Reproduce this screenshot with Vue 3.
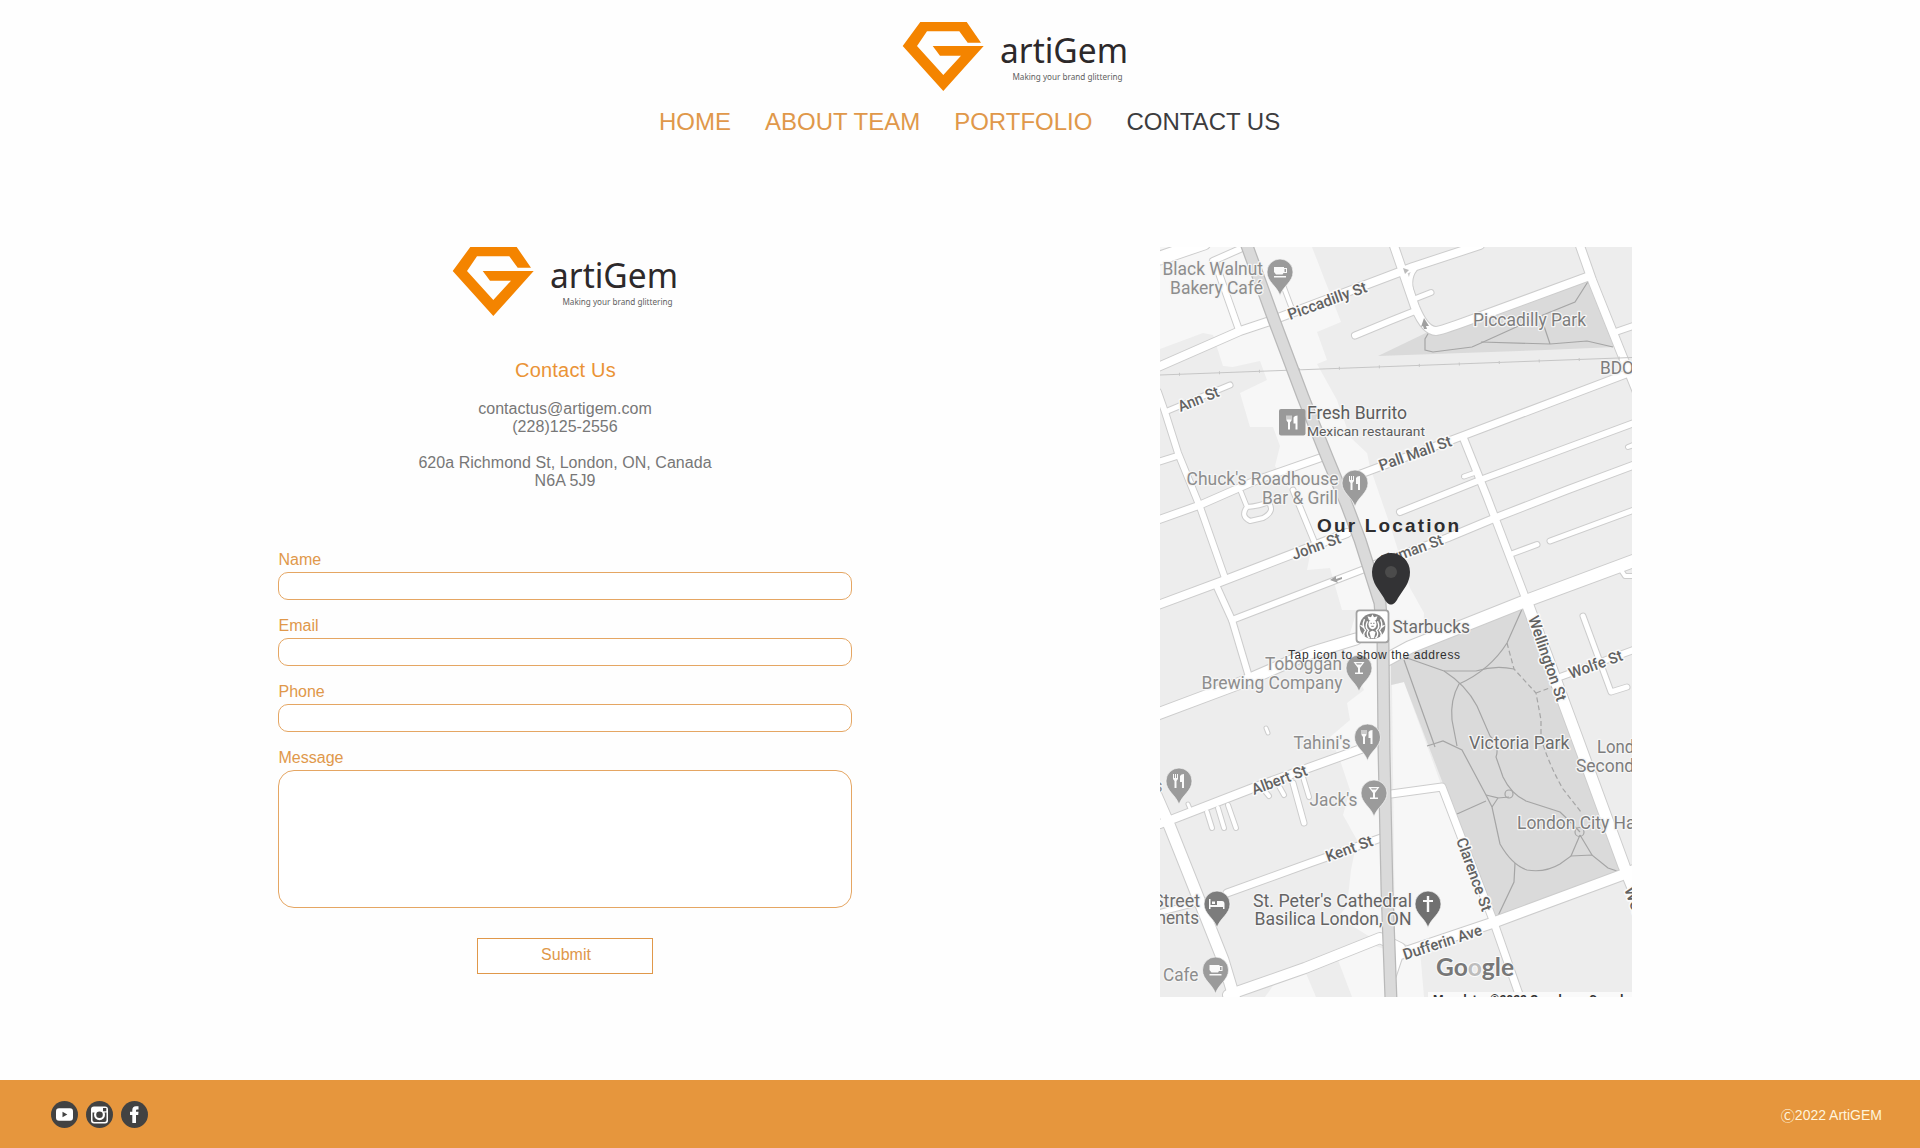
<script setup>
import { h } from 'vue'

const BrandLogo = () =>
  h('svg', { viewBox: '0 0 228 72', width: 228, height: 72, role: 'img', 'aria-label': 'artiGem' }, [
    h('path', {
      fill: '#f48400',
      d: 'M1.7 25 19.3 1H65.7L80 21.7H66.7L58.3 10.3H26L16 25 42.3 54 60 34.7H39L31.7 25H82.7L42.3 70Z'
    }),
    h('text', { x: 99, y: 41.7, 'font-family': '"Noto Sans", sans-serif', 'font-size': 34, fill: '#2d292a', textLength: 128, lengthAdjust: 'spacingAndGlyphs' }, 'artiGem'),
    h('text', { x: 111.5, y: 59.3, 'font-family': '"Noto Sans", sans-serif', 'font-size': 8.6, fill: '#606060', textLength: 110, lengthAdjust: 'spacingAndGlyphs' }, 'Making your brand glittering')
  ])

const nav = [
  { label: 'HOME' },
  { label: 'ABOUT TEAM' },
  { label: 'PORTFOLIO' },
  { label: 'CONTACT US', active: true }
]
const fields = ['Name', 'Email', 'Phone']

// [stroke width, path]
const roads = [
  [13, 'M1160 258 1204 243'],
  [6, 'M1213 261 1240 249'],
  [6, 'M1215 262 1239 330'],
  [4, 'M1283 285 1292 309'],
  [8, 'M1158 367 1240 331 1270 321 1397 273 1413 267 1480 245'],
  [6, 'M1355 335.5 1390 321 1415 311'],
  [8, 'M1393 243 1415 307Q1425 331 1436 331 1440 331 1470 320L1587 277'],
  [4, 'M1415 269Q1406 280 1414 299'],
  [5, 'M1417 298 1431 292.5'],
  [8, 'M1579 243 1592 280 1620 350 1637 392'],
  [6, 'M1617 331.5 1636 325'],
  [5, 'M1165 412 1230 385'],
  [6, 'M1158 392 1165 412 1178 453 1200 507 1225 578'],
  [6, 'M1158 462 1177 456'],
  [6, 'M1217 587 1232 620 1249 677'],
  [7, 'M1158 520 1200 505 1257 480 1320 458'],
  [7, 'M1358 475 1457 438 1634 371'],
  [6, 'M1400 512 1480 480 1634 423'],
  [4, 'M1464 476.5 1477 472'],
  [4, 'M1628 447 1636 444'],
  [7, 'M1463 437 1487 497 1527 602'],
  [8, 'M1158 605 1220 582 1347 533'],
  [7, 'M1368 567 1447 538 1495 518 1567 490 1634 465'],
  [5, 'M1550 541 1634 510'],
  [5, 'M1510 554.5 1537 544.5'],
  [4, 'M1241 492 1247 507M1247 507Q1260 506 1268 502 1276 511 1263 518L1250 521Q1240 516 1247 507'],
  [5, 'M1293 490 1314 541'],
  [6, 'M1232 620 1362 570'],
  [11, 'M1158 714 1243 682 1310 653 1356 639'],
  [12, 'M1386 660 1410 647 1523 602 1636 560'],
  [4, 'M1621 570 1625 576 1636 576'],
  [5, 'M1583 616 1611 692 1627 687'],
  [6, 'M1560 677 1636 649'],
  [11, 'M1527 603 1577 738 1624 866 1640 905'],
  [7, 'M1391 794 1442 787 1493 920 1521 1000'],
  [10, 'M1228 995 1305 968 1380 938 1400 948 1391 975M1400 954 1495 922 1622 875 1636 869'],
  [8, 'M1160 824 1253 788 1372 745'],
  [11, 'M1156 795 1170 827 1223 960 1235 1000'],
  [7, 'M1227 893 1310 863 1381 838'],
  [5, 'M1158 913 1200 902'],
  [4, 'M1207 812 1212 828'],
  [4, 'M1218 808 1224 828'],
  [4, 'M1228 805 1236 828'],
  [5, 'M1293 783 1304 823'],
  [4, 'M1303 777 1309 797'],
  [4, 'M1279 786 1284 795'],
  [4, 'M1264 790 1269 796'],
  [3, 'M1188 804 1191 811'],
  [3, 'M1266 728 1268 733']
]

const richmond =
  'M1246 243 1274 320 1303 397 1327 457 1346 503 1360 540 1380 603 1383 643 1384 750 1387 890 1391 1000'

const commercial = [
  'M1160 247H1312L1341 322 1317 332 1327 360 1317 364 1337 400 1350 437 1367 453 1370 467 1390 525 1410 588 1424 613 1423 640 1395 650 1378 660 1379 745 1383 945 1338 917 1347 906 1351 870 1357 840 1343 815 1350 790 1340 760 1330 737 1350 720 1347 703 1364 690 1345 650 1357 610 1342 610 1330 568 1307 570 1313 540 1290 490 1275 466 1280 446 1273 427 1250 427 1240 393 1267 380 1260 361 1233 367 1223 366 1213 335 1203 333 1160 349Z',
  'M1392 685 1404 682 1442 787 1493 920 1415 948 1395 940Z',
  'M1265 997 1275 983 1305 971 1316 997Z',
  'M1338 960 1375 946 1388 950 1388 997H1352Z',
  'M1395 965 1420 950 1424 997H1397Z'
]

const parks = [
  'M1378 356 1432 330 1440 333 1589 280 1616 347 1545 350Z',
  'M1391 664 1410 649 1524 604 1577 740 1622 874 1496 920 1457 820 1404 682 1391 685Z'
]

const paths = [
  'M1589 280 1575 302 1543 315 1481 343 1472 347 1433 352 1425 350 1425 339 1429 332',
  'M1481 342 1550 344 1587 341 1613 347M1550 344 1542 320',
  'M1523 607 1507 643Q1490 670 1459 684 1450 700 1452 720L1457 746',
  'M1404 660 1435 747M1407 658 1444 671Q1466 685 1477 706L1490 736Q1500 745 1496 757L1503 777Q1511 794 1526 801L1560 812Q1571 822 1580 832',
  'M1444 671 1476 671Q1495 665 1514 669',
  'M1427 746 1443 741 1462 750 1486 795 1492 807 1500 844Q1512 865 1527 870 1545 873 1560 864L1571 856 1592 855 1608 868 1620 872',
  'M1486 795 1498 798 1492 807M1498 798 1509 797M1486 801 1457 814M1515 863 1514 882 1497 918M1580 835 1571 856M1580 835 1592 855'
]
const dashed = 'M1507 643 1514 669 1536 693 1541 720 1541 738Q1549 765 1563 789L1581 812M1536 693 1555 686'

const pins = [
  { x: 1280, y: 272, icon: 'cup' },
  { x: 1355, y: 483, icon: 'fork' },
  { x: 1359, y: 668, icon: 'glass' },
  { x: 1367.5, y: 737, icon: 'fork' },
  { x: 1179, y: 781, icon: 'fork' },
  { x: 1374, y: 793, icon: 'glass' },
  { x: 1217, y: 904, icon: 'bed', fill: '#7c7c7c' },
  { x: 1215.5, y: 970, icon: 'cup' },
  { x: 1428, y: 904, icon: 'cross', fill: '#707070' }
]

const icons = {
  cup: 'M-6-5H4V-4H7V1H3.5L2.5 2.5H-4L-6 0ZM4.500-3V0H6V-3ZM-6 4H6V5.500H-6Z',
  fork: 'M-6-7H-5V-3H-4V-7H-3V-3H-2V-7H-1V-2L-2.500 0V7H-4.500V0L-6-2ZM1-5Q2-7 5-7V7H3V1H1Z',
  glass: 'M-5.500-6H5.500L1 0V4.500H4V6H-4V4.500H-1V0ZM-3-4.800-2-3.500H2L3-4.800Z',
  bed: 'M-8-5H-6.500V1H0V-3H5Q7.500-3 7.500 0V5H6V3H-6.500V5H-8ZM-5-2.500H-2V0H-5Z',
  cross: 'M-1.200-8H1.200V-4H5V-2H1.200V8H-1.200V-2H-5V-4H-1.200Z'
}

// Labels: text, x, baseline y, rendered length, colour
const places = [
  ['Black Walnut', 1162.5, 275, 100.5, '#8d8d8d'],
  ['Bakery Café', 1170, 293.5, 93, '#8d8d8d'],
  ['Fresh Burrito', 1307, 419, 100, '#5c5c5c'],
  ["Chuck's Roadhouse", 1186.5, 485, 152, '#8d8d8d'],
  ['Bar & Grill', 1262, 503.5, 76, '#8d8d8d'],
  ['Piccadilly Park', 1473, 326, 113, '#7d7d7d'],
  ['BDO', 1600, 374, 34, '#7d7d7d'],
  ['Starbucks', 1392.5, 633, 77.5, '#6c6c6c'],
  ['Toboggan', 1265, 670, 77, '#8d8d8d'],
  ['Brewing Company', 1201.5, 689, 141, '#8d8d8d'],
  ["Tahini's", 1293.5, 749, 57, '#8d8d8d'],
  ['Victoria Park', 1469, 749, 100.5, '#6c6c6c'],
  ['London', 1597, 753, 56, '#7d7d7d'],
  ['Secondary', 1576, 772, 82, '#7d7d7d'],
  ['London City Hall', 1517, 828.5, 127, '#7d7d7d'],
  ['s', 1154, 792, 8.500, '#8d8d8d'],
  ["Jack's", 1309.5, 805.5, 48, '#8d8d8d'],
  ['Street', 1153, 907, 47, '#6f6f6f'],
  ['Apartments', 1109, 924, 90, '#6f6f6f'],
  ["St. Peter's Cathedral", 1253, 906.5, 159, '#646464'],
  ['Basilica London, ON', 1254.5, 925, 157, '#646464'],
  ['Cafe', 1163, 980.5, 35.5, '#8d8d8d']
]

// Labels: text, x, y, rendered length, angle
const streets = [
  ['Piccadilly St', 1290, 320, 83, -20],
  ['Ann St', 1180.5, 412, 43, -22],
  ['Pall Mall St', 1381, 471, 76, -19.5],
  ['John St', 1294, 560, 51, -20],
  ['Hyman St', 1384, 566, 64, -20],
  ['Wellington St', 1528, 618, 89, 71],
  ['Wolfe St', 1571, 679, 56, -20],
  ['Albert St', 1254, 795, 58, -20.5],
  ['Kent St', 1328, 862, 49, -20],
  ['Clarence St', 1456, 840, 77, 70],
  ['Dufferin Ave', 1405, 960, 82, -18],
  ['Wellington', 1624, 889, 80, 70]
]
</script>

<template>
  <div class="page">
    <header class="header">
      <BrandLogo class="header-logo" />
      <nav class="nav">
        <a v-for="item in nav" :key="item.label" :class="{ active: item.active }">{{ item.label }}</a>
      </nav>
    </header>

    <main class="content">
      <section class="contact">
        <BrandLogo class="contact-logo" />
        <h1>Contact Us</h1>
        <address>
          contactus@artigem.com<br />(228)125-2556<br /><br />620a Richmond St, London, ON, Canada<br />N6A 5J9
        </address>
        <form class="form" @submit.prevent>
          <label v-for="field in fields" :key="field">
            <span>{{ field }}</span>
            <input type="text" />
          </label>
          <label>
            <span>Message</span>
            <textarea></textarea>
          </label>
          <button type="submit">Submit</button>
        </form>
      </section>

      <section class="location">
        <svg class="map" viewBox="1160 247 472 750" width="472" height="750">
          <rect x="1160" y="247" width="472" height="750" fill="#ededed" />
          <path v-for="d in commercial" :key="d" :d="d" fill="#f7f7f7" />
          <path v-for="d in parks" :key="d" :d="d" fill="#dadada" />
          <g fill="none" stroke="#a5a5a5" stroke-width="1.200">
            <path v-for="d in paths" :key="d" :d="d" />
            <circle cx="1509" cy="794" r="4" />
            <circle cx="1579.500" cy="832" r="4.500" />
            <path :d="dashed" stroke-dasharray="5 3" />
          </g>
          <g fill="none" stroke="#cdcdcd" stroke-linecap="round" stroke-linejoin="round">
            <path v-for="r in roads" :key="r[1]" :d="r[1]" :stroke-width="r[0] + 2" />
          </g>
          <g fill="none" stroke="#fff" stroke-linecap="round" stroke-linejoin="round">
            <path v-for="r in roads" :key="r[1]" :d="r[1]" :stroke-width="r[0]" />
          </g>
          <path d="M1160 375 1632 357.500" stroke="#c6c6c6" fill="none" />
          <path d="M1160 375 1632 357.500" stroke="#c6c6c6" stroke-width="3" stroke-dasharray="1 39" stroke-dashoffset="-19" fill="none" />
          <path :d="richmond" fill="none" stroke="#b9b9b9" stroke-width="13" stroke-linejoin="round" />
          <path :d="richmond" fill="none" stroke="#dadada" stroke-width="10.500" stroke-linejoin="round" />
          <g fill="#a0a0a0">
            <path d="M1330 580 1336 576 1336 579 1342 577 1342 579 1337 581 1338 583Z" />
            <path d="M1424 318 1429 326 1426 326 1427 329 1424 329 1423 326 1421 327Z" />
            <path d="M1403 268 1409 270 1405 274Z" fill="#bbb" />
          </g>

          <g v-for="p in pins" :key="p.x" :transform="`translate(${p.x} ${p.y})`">
            <path d="M0 23.500C-3 14-13 10-13 0A13 13 0 0 1 13 0C13 10 3 14 0 23.500Z" :fill="p.fill || '#9b9b9b'" stroke="#f6f6f6" stroke-width=".7" />
            <path :d="icons[p.icon]" fill="#fafafa" fill-rule="evenodd" />
          </g>
          <rect x="1279" y="409" width="26.500" height="26.500" rx="2" fill="#999" />
          <path :d="icons.fork" transform="translate(1292.500 422.500)" fill="#fff" />

          <g transform="translate(1372.500 626.300)">
            <rect x="-16" y="-16" width="32" height="32" rx="3" fill="#fff" stroke="#a2a2a2" stroke-width="1.800" />
            <circle r="12.800" fill="#858585" />
            <path d="M0-12 1.500-9 5-10 3.500-6H-3.500L-5-10-1.500-9Z" fill="#fff" />
            <ellipse cy="-2" rx="4" ry="5" fill="#fff" />
            <path d="M-2-3H-.700M.700-3H2M-1.200 0H1.200" stroke="#777" />
            <path d="M-5-5Q-8 1-4 4-7 8-3 12M5-5Q8 1 4 4 7 8 3 12M-8-7Q-11 0-7 4-10 8-8 10M8-7Q11 0 7 4 10 8 8 10M-12-1-8 2M12-1 8 2" fill="none" stroke="#fff" stroke-width="1.400" />
            <path d="M-3 6Q0 3 3 6L1.500 12H-1.500Z" fill="#fff" />
          </g>

          <g class="place">
            <text v-for="t in places" :key="t[0]" :x="t[1]" :y="t[2]" :textLength="t[3]" :fill="t[4]" lengthAdjust="spacingAndGlyphs">{{ t[0] }}</text>
            <text x="1307" y="435.500" textLength="118" lengthAdjust="spacingAndGlyphs" class="sub">Mexican restaurant</text>
          </g>
          <g class="street">
            <text v-for="t in streets" :key="t[0]" :transform="`translate(${t[1]} ${t[2]}) rotate(${t[4]})`" :textLength="t[3]" lengthAdjust="spacingAndGlyphs">{{ t[0] }}</text>
          </g>

          <text class="google" x="1436" y="975.500" textLength="78" lengthAdjust="spacingAndGlyphs">Go<tspan fill="#bdbdbd">o</tspan>gle</text>
          <rect x="1428" y="992" width="204" height="5" fill="#fafafa" />
          <g class="credit">
            <text x="1433" y="1004">Map data</text>
            <text x="1490" y="1004">©2022 Google</text>
            <text x="1589" y="1004">Canada</text>
          </g>

          <text class="title" x="1317" y="532" textLength="142">Our Location</text>
          <path d="M1391 604.500C1388 604.500 1386 602 1384 598L1376 586Q1372 579 1372 572A19 19 0 0 1 1410 572Q1410 579 1406 586L1398 598C1396 602 1394 604.500 1391 604.500Z" fill="#333335" />
          <circle cx="1391" cy="572" r="6" fill="#4b4b4b" />
          <text class="hint" x="1288" y="659" textLength="172">Tap icon to show the address</text>
        </svg>
      </section>
    </main>

    <footer class="footer">
      <div class="social">
        <svg width="27" height="27" viewBox="0 0 27 27">
          <circle cx="13.500" cy="13.500" r="13.500" fill="#424242" />
          <rect x="5" y="7.300" width="17" height="12.500" rx="3" fill="#fff" />
          <path d="M11.500 10.800 16.300 13.500 11.500 16.200Z" fill="#424242" />
        </svg>
        <svg width="27" height="27" viewBox="0 0 27 27">
          <circle cx="13.500" cy="13.500" r="13.500" fill="#424242" />
          <rect x="5" y="5.500" width="17" height="17" rx="3" fill="#fff" />
          <path d="M6.500 11.500H20.500V19Q20.500 21 18.500 21H8.500Q6.500 21 6.500 19Z" fill="#424242" />
          <circle cx="13.500" cy="13.700" r="5.500" fill="#fff" />
          <circle cx="13.500" cy="13.700" r="3.300" fill="#424242" />
          <rect x="17" y="7" width="3.300" height="3.300" fill="#424242" />
        </svg>
        <svg width="27" height="27" viewBox="0 0 27 27">
          <circle cx="13.500" cy="13.500" r="13.500" fill="#424242" />
          <path d="M11.300 22V14H9V10.800H11.300V9Q11.300 5.200 15 5.200H17.500V8.500H16Q15 8.500 15 9.500V10.800H17.500L17.200 14H15V22Z" fill="#fff" />
        </svg>
      </div>
      <p><span class="mark">Ⓒ</span>2022 ArtiGEM</p>
    </footer>
  </div>
</template>

<style>
body {
  margin: 0;
  background: #fefefe;
}
</style>

<style scoped>
.page {
  width: 1920px;
  height: 1148px;
  display: flex;
  flex-direction: column;
  overflow: hidden;
  font-family: "Liberation Sans", Arial, sans-serif;
}
.header {
  height: 247px;
  flex: none;
  display: flex;
  flex-direction: column;
}
.header-logo {
  margin: 21px 0 0 901px;
}
.nav {
  display: flex;
  gap: 34px;
  margin: 15px 0 0 659px;
  font-size: 24px;
  line-height: 28px;
  white-space: nowrap;
}
.nav a {
  color: #e0984a;
}
.nav a.active {
  color: #3c3c3e;
}
.content {
  height: 833px;
  flex: none;
  display: flex;
  align-items: flex-start;
}
.contact {
  width: 574px;
  margin-left: 278px;
  display: flex;
  flex-direction: column;
}
.contact-logo {
  margin: -1px 0 0 173px;
}
h1 {
  margin: 40px 0 0;
  font-size: 20px;
  line-height: 24px;
  font-weight: 400;
  text-align: center;
  letter-spacing: 0.2px;
  text-indent: 1px;
  color: #ea9336;
}
address {
  margin-top: 18px;
  font-style: normal;
  font-size: 16px;
  line-height: 18px;
  letter-spacing: 0.04px;
  text-align: center;
  color: #777;
}
.form {
  margin-top: 61px;
  display: flex;
  flex-direction: column;
  gap: 17px;
}
.form label {
  display: flex;
  flex-direction: column;
  gap: 3px;
  font-size: 16px;
  line-height: 18px;
  color: #e0984a;
}
.form input,
.form textarea {
  box-sizing: border-box;
  width: 574px;
  height: 28px;
  margin: 0;
  padding: 0 8px;
  border: 1px solid #e5a663;
  border-radius: 10px;
  background: #fff;
  outline: none;
  resize: none;
}
.form label span {
  padding-left: 0.5px;
}
.form textarea {
  height: 138px;
  border-radius: 16px;
}
.form button {
  align-self: center;
  box-sizing: border-box;
  width: 176px;
  height: 36px;
  margin-top: 13px;
  padding: 0 0 2px 2px;
  border: 1px solid #e0984a;
  background: #fff;
  font: 16px "Liberation Sans", Arial, sans-serif;
  color: #e0984a;
}
.location {
  margin-left: 308px;
}
.map {
  display: block;
  font-family: Roboto, sans-serif;
}
.place text {
  font-size: 17.5px;
  paint-order: stroke;
  stroke: #f5f5f5;
  stroke-width: 2.5px;
  stroke-linejoin: round;
}
.place .sub {
  font-size: 13.5px;
  fill: #5c5c5c;
}
.street text {
  font-size: 15.5px;
  font-weight: 500;
  fill: #626262;
  paint-order: stroke;
  stroke: #fafafa;
  stroke-width: 3px;
  stroke-linejoin: round;
}
.google {
  font-family: Lato, sans-serif;
  font-size: 25px;
  font-weight: 700;
  fill: #777;
  paint-order: stroke;
  stroke: #fafafa;
  stroke-width: 2px;
}
.credit text {
  font-size: 12px;
  font-weight: 700;
  fill: #333;
}
.title {
  font: 700 19px "Liberation Sans", Arial, sans-serif;
  fill: #2e2e30;
}
.hint {
  font: 12px "Liberation Sans", Arial, sans-serif;
  fill: #303030;
}
.footer {
  height: 68px;
  flex: none;
  box-sizing: border-box;
  padding: 0 38px 0 51px;
  display: flex;
  align-items: center;
  justify-content: space-between;
  background: #e6963d;
}
.social {
  display: flex;
  gap: 8px;
}
.footer p {
  margin: 2px 0 0;
  display: flex;
  align-items: center;
  font-size: 14px;
  line-height: 18px;
  color: #fff4dc;
}
.mark {
  font-family: "Noto Sans CJK SC", sans-serif;
}
</style>
